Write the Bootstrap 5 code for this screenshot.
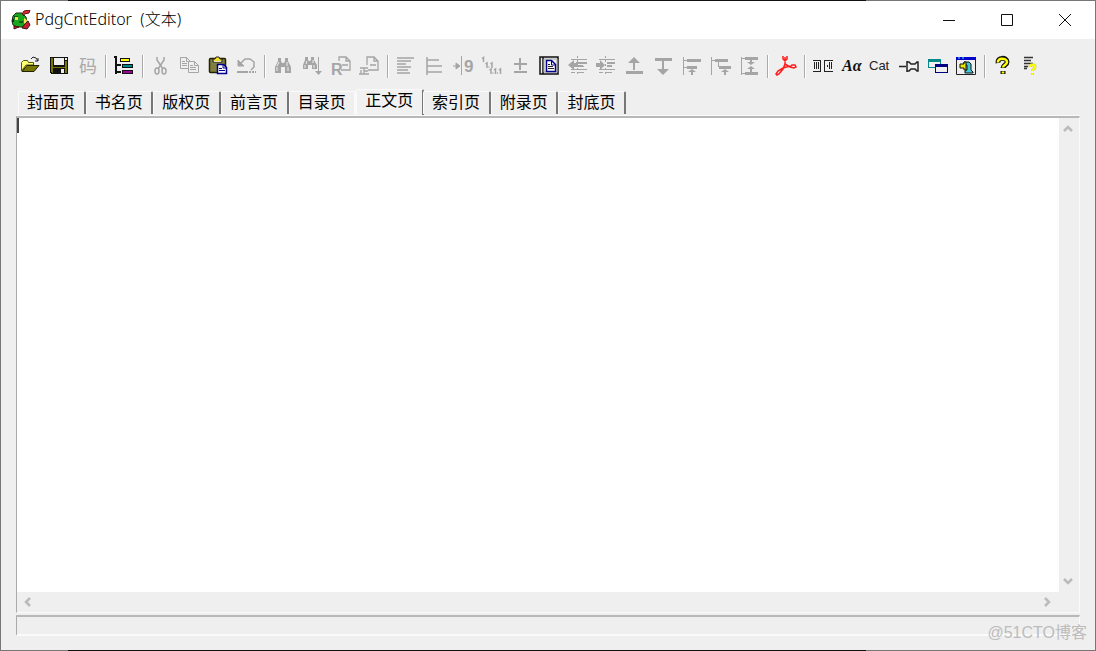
<!DOCTYPE html>
<html lang="zh-CN">
<head>
<meta charset="utf-8">
<meta name="viewport" content="width=device-width, initial-scale=1">
<title>PdgCntEditor (文本)</title>
<link href="https://cdn.jsdelivr.net/npm/bootstrap@5.3.0/dist/css/bootstrap.min.css" rel="stylesheet">
<style>
body{font-family:"Liberation Sans","Noto Sans CJK SC",sans-serif;background:#efefef;color:#000}
.app-window{border:1px solid #666;border-image:linear-gradient(90deg,#777 68px,#111 68px,#111 79%,#777 79%) 1;background:#efefef}
.titlebar{height:38px;padding-left:10px;padding-right:1px}
.app-name{font:300 16px/20px "Noto Sans","Noto Sans CJK SC",sans-serif;margin-left:4px;padding-bottom:2px;white-space:pre}
.win-btn{width:58px;height:38px;padding-bottom:2px!important}
.plain{border:0;background:none;padding:0;color:inherit}
.toolbar{max-width:1030px;margin:12px 0 0 15px;height:30px}
.tool{flex:0 1 29px;min-width:0;height:30px;display:flex;align-items:center;justify-content:center}
.tool svg{flex:none;overflow:visible;display:block}
.tool:disabled{color:#a5a5a5}
.divider{flex:0 1 8px;height:23px;border-left:1px solid #aaa;box-shadow:inset 1px 0 #fff;margin-left:3px;margin-right:-3px}
.tabs{max-width:608px;margin-left:17px;height:27px;margin-top:7px}
.tab-btn{flex:1 1 0;height:23px;font-size:16px;line-height:20px;text-align:left;padding-left:8px;border-top:1px solid #fafafa;border-left:1px solid #fafafa;border-right:2px solid #777;border-radius:2px 2px 0 0;margin-bottom:1px;white-space:nowrap}
.tab-btn.active{height:26px;margin:0 -1px 0 0;padding-bottom:4px;background:#f1f1f1}
.tab-btn.before{border-right-color:#fafafa}
.sheet{margin:0 15px;border-top:1px solid #fafafa}
.edit-frame{border:1px solid #aaa;border-top:2px solid #b8b8b8;border-right-color:#fafafa;border-bottom-color:#fafafa}
.edit-area{resize:none;outline:0;overflow:hidden;font-size:16px;line-height:18px;background:#fff;border-radius:0}
.caret{left:0;top:0;width:2px;height:15px;background:#444}
.vbar{width:20px;padding:6px 2px 6px 0}
.hbar{height:20px;padding:0 27px 0 5px}
.status{height:21px;margin:2px 15px 14px;border:1px solid #aaa;border-top:2px solid #b8b8b8;border-right-color:#fafafa;border-bottom:2px solid #fafafa}
.watermark{right:8px;bottom:6px;font-size:16px;line-height:22px;color:#bcbcbc}
</style>
<script src="https://cdn.jsdelivr.net/npm/bootstrap@5.3.0/dist/js/bootstrap.bundle.min.js"></script>
</head>
<body>
<div class="app-window vh-100 d-flex flex-column position-relative">
<header class="titlebar bg-white d-flex align-items-center flex-shrink-0">
<svg width="20" height="20" viewBox="0 0 20 20"><path d="M1 11 2 6 5 3h6l4 4 1 5-3 5H6l-4-2z" fill="#19a51d" stroke="#163216"/><path d="M3 6h4v3H3zM8 11h4v2H8z" fill="#095b18"/><path d="M11 4l2-3 6-1-1 3-5 1v2z" fill="#db3038" stroke="#611"/><path d="M4 7h3v3H4zM13 8l3 2-1 5-2-2z" fill="#f2e74c"/><path d="M1 9h2v3H1z" fill="#222"/><path d="M3 16l5 1-5 2zM13 15l4-4 2 4-3 4-5-1z" fill="#c52231" stroke="#411"/></svg>
<h1 class="app-name mb-0">PdgCntEditor  (文本)</h1>
<div class="ms-auto d-flex">
<button class="plain win-btn" aria-label="最小化"><svg width="12" height="12"><path d="M0 6.500h12" stroke="#111"/></svg></button>
<button class="plain win-btn" aria-label="最大化"><svg width="12" height="12"><path d="M.5 .5h11v11H.5z" fill="none" stroke="#111"/></svg></button>
<button class="plain win-btn" aria-label="关闭"><svg width="12" height="12"><path d="M0 0l12 12M12 0 0 12" stroke="#111"/></svg></button>
</div>
</header>
<div class="toolbar d-flex align-items-center flex-shrink-0 w-100" role="toolbar" aria-label="工具栏">
<button class="plain tool" aria-label="打开"><svg width="20" height="20"><path d="M1.500 15V6.500l2-2h4l1 2h5V9H6z" fill="#ffff75" stroke="#555500"/><path d="M2 15.500 7 9.500h12l-5 6z" fill="#777700" stroke="#222200"/><path d="M11 3l2-2 3 1 2 3m0-3v3h-3" fill="none" stroke="#222"/></svg></button>
<button class="plain tool" aria-label="保存"><svg width="20" height="20" shape-rendering="crispEdges"><path d="M1 1h18v17H2l-1-1z" fill="#111"/><path d="M2 2h2v9h12V5h2v12h-2v-5H4v5H3l-1-1z" fill="#777700"/><path d="M5 2h10v7H5zM16 2h2v2h-2zM12 13h3v4h-3z" fill="#efefef"/></svg></button>
<button class="plain tool" disabled aria-label="编码"><svg width="20" height="20"><text x="1" y="17" font-size="18" fill="#aaa">码</text></svg></button>
<span class="divider"></span>
<button class="plain tool" aria-label="目录树"><svg width="20" height="20" shape-rendering="crispEdges"><path d="M2 1v17M0 1h3M2 9h5M2 16h5" stroke="#111" stroke-width="2"/><path d="M6 2h10v4H6zM8 8h11v4H8zM8 14h11v4H8z" fill="#111"/><path d="M7 3h8v2H7z" fill="#ff0"/><path d="M9 9h9v2H9z" fill="#008b8b"/><path d="M9 15h9v2H9z" fill="#a000a0"/></svg></button>
<span class="divider"></span>
<button class="plain tool" disabled aria-label="剪切"><svg width="20" height="20" fill="none" stroke="currentColor" stroke-width="1.500"><path d="M6 1v3l6 9M13 1v3l-6 9"/><ellipse cx="6" cy="15" rx="2" ry="3"/><ellipse cx="13" cy="15" rx="2" ry="3"/></svg></button>
<button class="plain tool" disabled aria-label="复制"><svg width="20" height="20" fill="#efefef" stroke="currentColor"><path d="M1.500 1.500h6l4 4v7h-10zM7.500 1.500v4h4M3 5.500h3m-3 2h5m-5 2h5"/><path d="M9.500 5.500h6l4 4v7h-10zM15.500 5.500v4h4M11 9.500h3m-3 2h6m-6 2h6"/></svg></button>
<button class="plain tool" aria-label="粘贴"><svg width="20" height="20"><rect x="1.500" y="2.500" width="16" height="14" rx="1" fill="#807f40" stroke="#222200" stroke-width="1.500"/><path d="M5 6V3h2l1-2h3l1 2h2v3z" fill="#eedf25" stroke="#222"/><path d="M6 5.500h7" stroke="#ddd"/><path d="M9.500 8.500h6l3 3v6h-9z" fill="#fff" stroke="#00008b" stroke-width="1.500"/><path d="M15 9v3h3M11 12.500h3m-3 2h6" fill="none" stroke="#00008b"/></svg></button>
<button class="plain tool" disabled aria-label="撤销"><svg width="20" height="20" fill="none" stroke="currentColor"><path d="M4 7 8 3h5l4 3v5l-3 3" stroke-width="1.500"/><path d="M1 4v6h6z" fill="currentColor"/><path d="M0 16h11m1 0h2m1 0h2m1 0h1" stroke-width="2"/></svg></button>
<span class="divider"></span>
<button class="plain tool" disabled aria-label="查找"><svg width="20" height="20" fill="currentColor"><path d="M5 2h3v3l1 2h2l1-2V2h3v3l3 6v6h-6v-6H8v6H2v-6l3-6z"/><path d="M4 11v4m2-9-2 4m10-4v4m1 1v4" stroke="#efefef"/></svg></button>
<button class="plain tool" disabled aria-label="查找下一个"><svg width="20" height="20" fill="currentColor"><path d="M3 1h3v3l1 1h1l1-1V1h3v3l3 5v4h-5V9H6v4H1V9l2-5z"/><path d="M3 9v3m2-7-1 3m7-4v3m1 2v3" stroke="#efefef"/><path d="M16 1h1v14h3l-3.500 4-3.500-4h3z"/></svg></button>
<button class="plain tool" disabled aria-label="替换"><svg width="20" height="20" fill="none" stroke="currentColor" stroke-width="1.300"><path d="M8 5V1h7l4 4v9h-9M15 1v4h4M11 9h6"/><text x="0" y="19" fill="currentColor" stroke="none" font-size="16" font-weight="bold">R</text></svg></button>
<button class="plain tool" disabled aria-label="更正"><svg width="20" height="20" fill="none" stroke="currentColor" stroke-width="1.300"><path d="M8 9V1h7l4 4v9H9M15 1v4h4M11 9h6"/><path d="M1 12h8M5 12v6M5 15h4M2 14v4M0 18h10"/></svg></button>
<span class="divider"></span>
<button class="plain tool" disabled aria-label="左对齐"><svg width="20" height="20" stroke="currentColor" stroke-width="1.500"><path d="M1 2h17M1 5h14M1 8h9M1 11h14M1 14h11M1 17h13"/></svg></button>
<button class="plain tool" disabled aria-label="层级对齐"><svg width="20" height="20" stroke="currentColor" stroke-width="1.500"><path d="M2 1v18M2 4h12M2 10h15M2 16h15"/></svg></button>
<button class="plain tool" disabled aria-label="页码"><svg width="20" height="20" stroke="currentColor" fill="currentColor"><path d="M0 10h6M3 7l4 3-4 3z"/><path d="M8.500 0v19"/><text x="11" y="16" stroke="none" font-size="17" font-weight="bold">9</text></svg></button>
<button class="plain tool" disabled aria-label="多级编号"><svg width="20" height="20" fill="none" stroke="currentColor"><path d="M0 2.500 1.500 1.500V6M3.500 8 5 7v5M6.500 11h1M8.500 8 10 7v5M7.500 14 9 13v5M10.500 17h1M12 14l1.500-1v5M15 17h1M17 14l1.500-1v5" stroke-width="1.500"/></svg></button>
<button class="plain tool" disabled aria-label="增减页码"><svg width="20" height="20" stroke="currentColor" stroke-width="2" shape-rendering="crispEdges"><path d="M9 2v12M3 8h13M3 16h13"/></svg></button>
<button class="plain tool" aria-label="页面"><svg width="20" height="20" fill="none"><path d="M1 1h18v17H1zM4 1v17" stroke="#111" stroke-width="1.500"/><path d="M5 3h13v13H5z" fill="#eee" stroke="#aaa"/><path d="M7.500 4.500h5l4 4v7h-9z" fill="#fff" stroke="#000088" stroke-width="1.500"/><path d="M12.500 5v4h4" stroke="#000088"/><path d="M9 8.500h2m-2 2h5m-5 2h6" stroke="#222"/></svg></button>
<button class="plain tool" disabled aria-label="减少缩进"><svg width="20" height="20" stroke="currentColor" fill="currentColor"><path d="M3 3.500h16M12 6.500h7M9 10.500h7M3 13.500h16M3 16.500h4m3 0h6"/><path d="M8 7h11m-11 3h7" stroke-width="2"/><path d="M9.500 0v19" stroke-dasharray="2 2"/><path d="M0 9l6-5v3h3v4H6v3z" stroke="none"/></svg></button>
<button class="plain tool" disabled aria-label="增加缩进"><svg width="20" height="20" stroke="currentColor" fill="currentColor"><path d="M3 3.500h16M12 6.500h7M12 10.500h4M3 13.500h16M3 16.500h4m3 0h6"/><path d="M11 7h8m-8 3h5" stroke-width="2"/><path d="M9.500 0v19" stroke-dasharray="2 2"/><path d="M0 7h4V4l5 5-5 5v-3H0z" stroke="none"/></svg></button>
<button class="plain tool" disabled aria-label="上移"><svg width="20" height="20" fill="currentColor"><path d="M9 1l6 6h-5v7H8V7H3zM1 15h17v3H1z"/></svg></button>
<button class="plain tool" disabled aria-label="下移"><svg width="20" height="20" fill="currentColor"><path d="M1 2h17v3H1zM8 5h2v8h5l-6 6-6-6h5z"/></svg></button>
<button class="plain tool" disabled aria-label="同级上移"><svg width="20" height="20" fill="currentColor"><path d="M1 1h1v18H1zM2 4h3v1H2zM5 3h14v3H5zM2 11h3v1H2zM5 10h10v3H5zM10 13l4 3h-3v3H9v-3H6z"/></svg></button>
<button class="plain tool" disabled aria-label="下级移动"><svg width="20" height="20" fill="currentColor"><path d="M0 1h1v18H0zM1 4h3v1H1zM4 3h13v3H4zM7 6h1v5H7zM8 10h12v3H8zM14 13l4 3h-3v3h-2v-3h-3z"/></svg></button>
<button class="plain tool" disabled aria-label="合并"><svg width="20" height="20" fill="currentColor"><path d="M1 1h1v18H1zM2 2h3v1H2zM5 1h13v3H5zM5 16h13v3H5zM2 17h3v1H2zM10 4h2v2h3l-4 3-4-3h3zM11 10l4 3h-3v3h-2v-3H7z"/></svg></button>
<span class="divider"></span>
<button class="plain tool" aria-label="PDF"><svg width="20" height="20" fill="none" stroke="#ff1c1c" stroke-width="1.500"><path d="M7 0v3l2 2 2-2V0M9 1v7l-2 5-4 5-2 1-1-1 2-3 5-3 7-2M9 8l5 3 4 1 2-1-1-2h-3l-2 2"/></svg></button>
<span class="divider"></span>
<button class="plain tool" aria-label="双页"><svg width="20" height="20" fill="none" stroke="#222" shape-rendering="crispEdges"><path d="M0 4.500h7.500v11H0M3.500 6v7M5.500 6v7M1.500 6v7M11 15.500h9M11 4.500h9M11.500 4v12M14.500 9v2M16.500 6v7M18.500 6v7"/></svg></button>
<button class="plain tool" aria-label="字体"><svg width="20" height="20"><text x="0" y="15" fill="#111" font-family="Liberation Serif,serif" font-size="16" font-weight="bold" font-style="italic">Aα</text></svg></button>
<button class="plain tool" aria-label="分类"><svg width="20" height="20"><text x="-1" y="14" fill="#222" font-size="13">Cat</text></svg></button>
<button class="plain tool" aria-label="置顶"><svg width="20" height="20" fill="none" stroke="#222" stroke-width="1.500"><path d="M0 10.500h7M8 5v11M8 6h2l2 2h4l2-2h1v9h-1l-2-2h-4l-2 2H8"/></svg></button>
<button class="plain tool" aria-label="层叠窗口"><svg width="20" height="20" shape-rendering="crispEdges"><path d="M0 3h13v9H0z" fill="#078989"/><path d="M1 6h11v5H1z" fill="#eee"/><path d="M7 8h13v9H7z" fill="#000084"/><path d="M8 11h11v5H8z" fill="#eee"/></svg></button>
<button class="plain tool" aria-label="转换"><svg width="20" height="20"><path d="M.5 1.500h19v17H.5z" fill="#eee" stroke="#222"/><path d="M0 1h20v3H0z" fill="#0000ce"/><path d="M2 2h2m2 0h2" stroke="#5ee"/><path d="M8 6h5l2 2v6l2 2v1H9v-2l2-1V9H8z" fill="#40c8d6" stroke="#111"/><path d="M4 8h4V6h2v8H8v-2H4z" fill="#eee900" stroke="#111"/></svg></button>
<span class="divider"></span>
<button class="plain tool" aria-label="帮助"><svg width="20" height="20" fill="none"><path d="M5 7C4 1 14 1 14 6c0 3-4 3-4 6M10 15v3" stroke="#111" stroke-width="5"/><path d="M5 6.500C4 1.500 14 1.500 14 6c0 3-4 3-4 5.500M10 15.500v2" stroke="#ff0" stroke-width="2.500"/></svg></button>
<button class="plain tool" aria-label="关于"><svg width="20" height="20" fill="none"><path d="M3 1.500h9M3 4.500h7M3 7.500h9M3 10.500h4M3 12.500h3" stroke="#333" stroke-width="1.500"/><path d="M9 11c0-3 5-3 5 0 0 2-2.500 2-2.500 4M11.500 17v2" stroke="#c8c860" stroke-width="3"/><path d="M9 11c0-3 5-3 5 0 0 2-2.500 2-2.500 4M11.500 17v2" stroke="#ff0" stroke-width="2"/></svg></button>
</div>
<nav class="tabs d-flex align-items-end flex-shrink-0" role="tablist" aria-label="页面类型">
<button class="plain tab-btn" role="tab">封面页</button>
<button class="plain tab-btn" role="tab">书名页</button>
<button class="plain tab-btn" role="tab">版权页</button>
<button class="plain tab-btn" role="tab">前言页</button>
<button class="plain tab-btn before" role="tab">目录页</button>
<button class="plain tab-btn active" role="tab" aria-selected="true">正文页</button>
<button class="plain tab-btn" role="tab">索引页</button>
<button class="plain tab-btn" role="tab">附录页</button>
<button class="plain tab-btn" role="tab">封底页</button>
</nav>
<main class="sheet flex-grow-1 d-flex flex-column">
<div class="edit-frame flex-grow-1 d-flex flex-column">
<div class="d-flex flex-grow-1">
<div class="position-relative d-flex flex-grow-1"><textarea class="plain edit-area flex-grow-1" aria-label="正文页内容"></textarea><span class="caret position-absolute"></span></div>
<div class="vbar d-flex flex-column justify-content-between align-items-center">
<svg width="10" height="10" fill="none" stroke="#bbb" stroke-width="2.500"><path d="M1 7l4-4 4 4"/></svg>
<svg width="10" height="10" fill="none" stroke="#bbb" stroke-width="2.500"><path d="M1 3l4 4 4-4"/></svg>
</div>
</div>
<div class="hbar d-flex justify-content-between align-items-center">
<svg width="10" height="10" fill="none" stroke="#bbb" stroke-width="2.500"><path d="M8 1 4 5l4 4"/></svg>
<svg width="10" height="10" fill="none" stroke="#bbb" stroke-width="2.500"><path d="M3 1l4 4-4 4"/></svg>
</div>
</div>
</main>
<footer class="status flex-shrink-0"></footer>
<span class="watermark position-absolute">@51CTO博客</span>
</div>
</body>
</html>
